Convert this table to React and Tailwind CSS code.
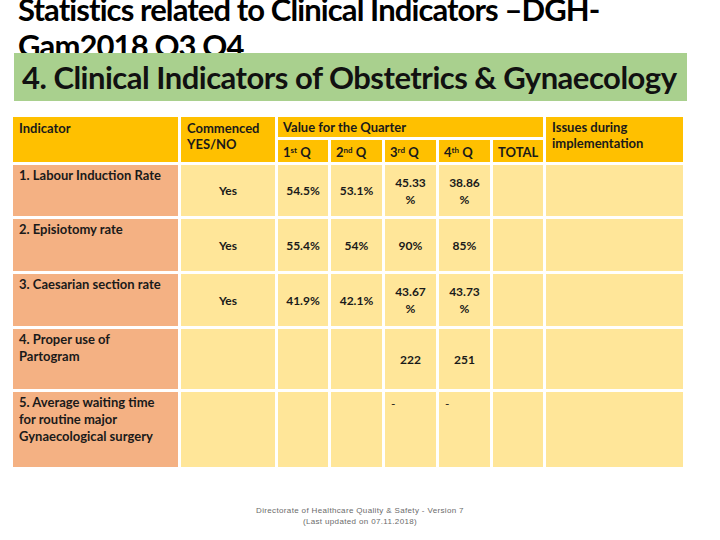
import React from "react";

const cal = { fontFamily: "Lato, 'Open Sans', sans-serif" };

function Sup({ base, sup }) {
  return (
    <span>
      {base}
      <sup className="text-[8px]">{sup}</sup> Q
    </span>
  );
}

export default function App() {
  const H = "bg-[#FFC000] text-[#1a1a1a] font-bold text-[13px] leading-[16px]";
  const S = "bg-[#F4B183] text-[#1a1a1a] font-bold text-[13px] leading-[17px] px-[6px] pt-[2px]";
  const D = "bg-[#FFE699] text-[#1a1a1a] text-[12px] leading-[17px] font-bold flex items-center justify-center text-center";
  return (
    <div className="w-[720px] h-[540px] bg-white overflow-hidden relative" style={cal}>
      <div className="h-[53px] overflow-hidden">
        <div className="mt-[-9px] pl-[18px] text-[31px] leading-[36px] font-bold text-black tracking-[-0.9px]">
          <div>Statistics related to Clinical Indicators –DGH-</div>
          <div>Gam2018 Q3 Q4</div>
        </div>
      </div>
      <div className="ml-[14px] w-[673px] h-[48px] bg-[#A9D08E] flex items-center pl-[8px] text-[31px] font-bold text-[#111] tracking-[-0.5px]">
        4. Clinical Indicators of Obstetrics &amp; Gynaecology
      </div>
      <div className="mt-[16px] ml-[13px] w-[670px]">
        <div className="grid gap-[3px] grid-cols-[165px_94px_50px_51px_51px_51px_50px_137px] grid-rows-[20px_22px_51px_52px_52px_60px_75px]">
          <div className={`${H} row-span-2 px-[6px] pt-[3px]`}>Indicator</div>
          <div className={`${H} row-span-2 px-[6px] pt-[3px]`}>
            Commenced
            <br />
            YES/NO
          </div>
          <div className={`${H} col-span-5 px-[5px] pt-[2px]`}>Value for the Quarter</div>
          <div className={`${H} row-span-2 px-[6px] pt-[2px]`}>
            Issues during
            <br />
            implementation
          </div>
          <div className={`${H} px-[5px] pt-[4px]`}><Sup base="1" sup="st" /></div>
          <div className={`${H} px-[5px] pt-[4px]`}><Sup base="2" sup="nd" /></div>
          <div className={`${H} px-[5px] pt-[4px]`}><Sup base="3" sup="rd" /></div>
          <div className={`${H} px-[5px] pt-[4px]`}><Sup base="4" sup="th" /></div>
          <div className={`${H} px-[5px] pt-[4px]`}>TOTAL</div>

          {/* Row 1 */}
          <div className={S}>1. Labour Induction Rate</div>
          <div className={D}>Yes</div>
          <div className={D}>54.5%</div>
          <div className={D}>53.1%</div>
          <div className={D}>45.33<br />%</div>
          <div className={D}>38.86<br />%</div>
          <div className={D}></div>
          <div className={D}></div>

          {/* Row 2 */}
          <div className={S}>2. Episiotomy rate</div>
          <div className={D}>Yes</div>
          <div className={D}>55.4%</div>
          <div className={D}>54%</div>
          <div className={D}>90%</div>
          <div className={D}>85%</div>
          <div className={D}></div>
          <div className={D}></div>

          {/* Row 3 */}
          <div className={S}>3. Caesarian section rate</div>
          <div className={D}>Yes</div>
          <div className={D}>41.9%</div>
          <div className={D}>42.1%</div>
          <div className={D}>43.67<br />%</div>
          <div className={D}>43.73<br />%</div>
          <div className={D}></div>
          <div className={D}></div>

          {/* Row 4 */}
          <div className={S}>
            4. Proper use of
            <br />
            Partogram
          </div>
          <div className={D}></div>
          <div className={D}></div>
          <div className={D}></div>
          <div className={D}>222</div>
          <div className={D}>251</div>
          <div className={D}></div>
          <div className={D}></div>

          {/* Row 5 */}
          <div className={S}>
            5. Average waiting time
            <br />
            for routine major
            <br />
            Gynaecological surgery
          </div>
          <div className={D}></div>
          <div className={D}></div>
          <div className={D}></div>
          <div className="bg-[#FFE699] text-[12px] pl-[6px] pt-[3px] text-[#1a1a1a]">-</div>
          <div className="bg-[#FFE699] text-[12px] pl-[6px] pt-[3px] text-[#1a1a1a]">-</div>
          <div className={D}></div>
          <div className={D}></div>
        </div>
      </div>
      <div
        className="mt-[38px] text-center text-[8px] leading-[11px] text-[#6b6b6b] tracking-[0.35px]"
        style={{ fontFamily: "'Liberation Sans', Arial, sans-serif" }}
      >
        <div>Directorate of Healthcare Quality &amp; Safety - Version 7</div>
        <div>(Last updated on 07.11.2018)</div>
      </div>
    </div>
  );
}
